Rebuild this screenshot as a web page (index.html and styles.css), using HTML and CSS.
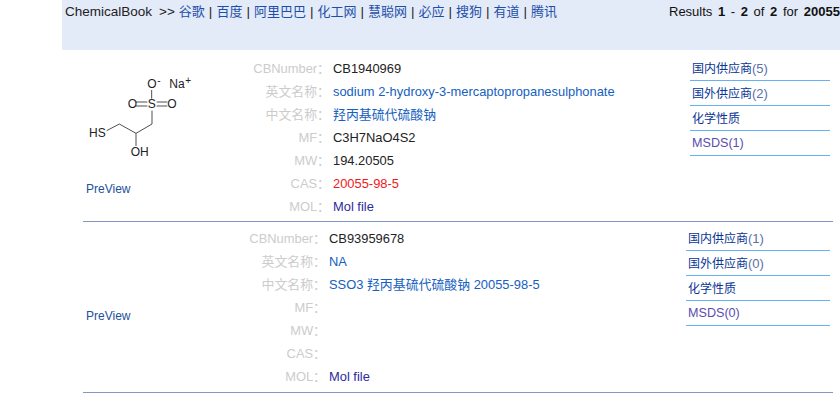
FILE: index.html
```html
<!DOCTYPE html>
<html lang="zh">
<head>
    <meta charset="UTF-8">
    <link rel="stylesheet" href="styles.css">
    <title>ChemicalBook</title>
</head>
<body>
<div class="page">
    <header class="top-bar">
        <div class="engines">
            ChemicalBook <span class="arrows">&gt;&gt;</span>
            <a href="#">谷歌</a> | <a href="#">百度</a> | <a href="#">阿里巴巴</a> | <a href="#">化工网</a> | <a href="#">慧聪网</a> | <a href="#">必应</a> | <a href="#">搜狗</a> | <a href="#">有道</a> | <a href="#">腾讯</a>
        </div>
        <div class="results">Results <b>1</b> - <b>2</b> of <b>2</b> for <b>20055-98-5</b></div>
    </header>

    <section class="row row-first">
        <div class="preview">
            <svg class="mol" width="110" height="90" viewBox="39 30 330 270">
                <g class="bonds">
                    <path d="M110 212 L148 192 L198 220 L246 192 L246 152"/>
                    <path d="M198 220 L198 258"/>
                    <path d="M245 90 L245 116"/>
                    <path d="M198 126 L232 126 M198 138 L232 138"/>
                    <path d="M260 126 L292 126 M260 138 L292 138"/>
                </g>
                <g class="atoms">
                    <text x="57" y="232">HS</text>
                    <text x="182" y="289">OH</text>
                    <text x="233" y="145">S</text>
                    <text x="173" y="145">O</text>
                    <text x="292" y="145">O</text>
                    <text x="232" y="85">O</text>
                    <text x="262" y="72" class="sup">-</text>
                    <text x="298" y="85">Na</text>
                    <text x="346" y="72" class="sup">+</text>
                </g>
            </svg>
            <a class="preview-link" href="#">PreView</a>
        </div>
        <dl class="info">
            <dt>CBNumber<i>：</i></dt><dd>CB1940969</dd>
            <dt>英文名称<i>：</i></dt><dd><a href="#">sodium 2-hydroxy-3-mercaptopropanesulphonate</a></dd>
            <dt>中文名称<i>：</i></dt><dd><a href="#">羟丙基硫代硫酸钠</a></dd>
            <dt>MF<i>：</i></dt><dd>C3H7NaO4S2</dd>
            <dt>MW<i>：</i></dt><dd>194.20505</dd>
            <dt>CAS<i>：</i></dt><dd class="cas">20055-98-5</dd>
            <dt>MOL<i>：</i></dt><dd><a class="mol-file" href="#">Mol file</a></dd>
        </dl>
        <ul class="links">
            <li><a href="#">国内供应商<span>(5)</span></a></li>
            <li><a href="#">国外供应商<span>(2)</span></a></li>
            <li><a href="#">化学性质</a></li>
            <li class="msds-item"><a class="msds" href="#">MSDS(1)</a></li>
        </ul>
    </section>

    <section class="row row-second">
        <div class="preview">
            <a class="preview-link" href="#">PreView</a>
        </div>
        <dl class="info">
            <dt>CBNumber<i>：</i></dt><dd>CB93959678</dd>
            <dt>英文名称<i>：</i></dt><dd><a href="#">NA</a></dd>
            <dt>中文名称<i>：</i></dt><dd><a href="#">SSO3 羟丙基硫代硫酸钠 20055-98-5</a></dd>
            <dt>MF<i>：</i></dt><dd></dd>
            <dt>MW<i>：</i></dt><dd></dd>
            <dt>CAS<i>：</i></dt><dd></dd>
            <dt>MOL<i>：</i></dt><dd><a class="mol-file" href="#">Mol file</a></dd>
        </dl>
        <ul class="links">
            <li><a href="#">国内供应商<span>(1)</span></a></li>
            <li><a href="#">国外供应商<span>(0)</span></a></li>
            <li><a href="#">化学性质</a></li>
            <li class="msds-item"><a class="msds" href="#">MSDS(0)</a></li>
        </ul>
    </section>
</div>
</body>
</html>
```

FILE: styles.css
```css
html, body {
    overflow: hidden;
}

body {
    margin: 0;
    background-color: #fff;
    font-family: "Liberation Sans", "Noto Sans CJK SC", sans-serif;
    font-size: 12.9px;
    color: #222;
}

a {
    color: #1560c0;
    text-decoration: none;
}

.page {
    margin-left: 62px;
    height: 403px;
    overflow: hidden;
}

.top-bar {
    display: flex;
    justify-content: space-between;
    height: 50px;
    padding: 5px 0 0 3px;
    box-sizing: border-box;
    background-color: #e3eaf8;
    white-space: nowrap;
    line-height: 14px;
}

.engines {
    font-size: 13.5px;
    word-spacing: 0.25px;
}

.engines a {
    color: #1d4fa8;
    font-size: 13px;
}

.arrows {
    margin-left: 3px;
}

.results {
    width: 171px;
    flex: none;
    overflow: hidden;
    color: #111;
    font-size: 13px;
    word-spacing: 2px;
}

.row {
    display: flex;
    width: 750px;
    height: 171px;
    margin-left: 21px;
    box-sizing: border-box;
    border-bottom: 1px solid #8496c8;
}

.row-first {
    height: 172px;
}

.preview {
    flex: none;
    width: 168px;
    box-sizing: border-box;
    display: flex;
    flex-direction: column;
    padding-left: 3px;
}

.row-first .preview {
    padding-top: 20px;
}

.row-second .preview {
    justify-content: center;
    padding-top: 18px;
}

.mol {
    display: block;
    margin: 0 0 22px -3px;
}

.bonds path {
    fill: none;
    stroke: #333;
    stroke-width: 2.6;
}

.atoms text {
    font-size: 36px;
    fill: #222;
}

.atoms .sup {
    font-size: 30px;
}

.preview-link {
    color: #24509c;
    font-size: 12px;
    line-height: 14px;
}

.info {
    flex: 1;
    display: grid;
    grid-template-columns: 72px 1fr;
    grid-auto-rows: 23px;
    align-content: start;
    margin: 0;
    padding-top: 7px;
    line-height: 23px;
    white-space: nowrap;
}

.row-second .info {
    margin-left: -4px;
    padding-top: 5px;
}

.info dt {
    color: #ccc;
    text-align: right;
}

.info dt i {
    font-style: normal;
    margin-right: -7px;
}

.info dd {
    margin: 0 0 0 10px;
}

.info .cas {
    color: #f01818;
}

.info .mol-file {
    color: #2c2c9c;
}

.links {
    flex: none;
    width: 140px;
    margin: 6px 3px 0 0;
    padding: 0;
    list-style: none;
    font-size: 12px;
}

.row-second .links {
    width: 144px;
    margin-top: 4px;
}

.links li {
    height: 24px;
    padding-left: 2px;
    border-bottom: 1px solid #66b0f5;
    line-height: 26px;
}

.links .msds-item {
    line-height: 24px;
}

.links a {
    color: #0a3594;
}

.links span {
    color: #5c6fa8;
    font-size: 13px;
}

.links .msds {
    color: #5a4cb0;
    font-size: 12.6px;
}
```
